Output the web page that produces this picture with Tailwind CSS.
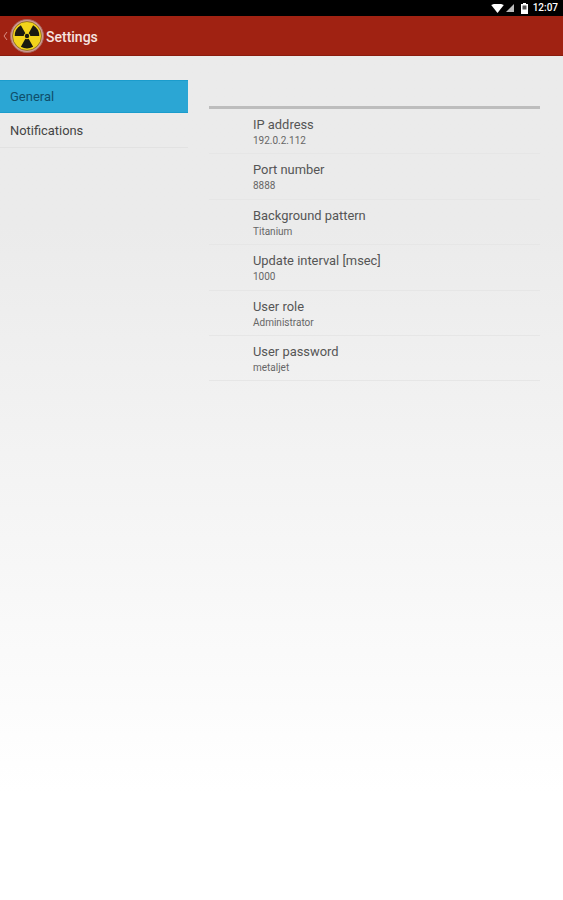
<!DOCTYPE html>
<html lang="en">
<head>
    <meta charset="UTF-8">
    <meta name="viewport" content="width=device-width, initial-scale=1.0">
    <title>Settings</title>
    <script src="https://cdn.jsdelivr.net/npm/@tailwindcss/browser@4"></script>
</head>
<body class="font-['Roboto',sans-serif]">
    <div class="flex flex-col w-[563px] h-[900px] overflow-hidden bg-gradient-to-b from-[#ebebeb] from-[25%] to-white to-[88%]">
        <!-- Status bar -->
        <div class="h-4 bg-black flex items-center justify-end pr-[5px] text-white shrink-0">
            <svg class="w-[13px] h-[9px]" viewBox="0 0 14 10"><path d="M0 1 Q7 -2 14 1 L7 10 Z" fill="#fff"/></svg>
            <svg class="w-[8px] h-[8px] ml-[2px]" viewBox="0 0 9 9"><path d="M0 9 L9 0 V9 Z" fill="#bbb"/></svg>
            <svg class="w-[7px] h-[11px] ml-[7px]" viewBox="0 0 7 11"><path d="M2 0 H5 V1 H7 V11 H0 V1 H2 Z" fill="#fff"/><rect x="1.5" y="2.5" width="4" height="4" fill="#555"/></svg>
            <span class="text-[10px] font-medium ml-[5px] leading-none">12:07</span>
        </div>

        <!-- Action bar -->
        <div class="h-10 bg-[#a02212] border-b border-[#8a1c0e] flex items-center shrink-0">
            <svg class="w-[5px] h-[10px] ml-[3px] mt-[1px]" viewBox="0 0 5 10"><path d="M4 1 L1 5 L4 9" fill="none" stroke="#d98f85" stroke-width="1"/></svg>
            <svg class="w-[34px] h-[34px] ml-[2px] mt-[1px]" viewBox="0 0 36 36">
                <circle cx="18" cy="18" r="17.5" fill="#cf9a92" stroke="#a8685e" stroke-width="1"/>
                <circle cx="18" cy="18" r="15.3" fill="#f2d31b" stroke="#5a3a10" stroke-width="0.6"/>
                <circle cx="18" cy="18" r="2.3" fill="#1a1a10"/>
                <path d="M19.75 14.97 L24.5 6.74 A13 13 0 0 1 31 18 H21.5 A3.5 3.5 0 0 0 19.75 14.97 Z" fill="#1a1a10"/>
                <path d="M16.25 14.97 L11.5 6.74 A13 13 0 0 0 5 18 H14.5 A3.5 3.5 0 0 1 16.25 14.97 Z" fill="#1a1a10"/>
                <path d="M16.25 21.03 L11.5 29.26 A13 13 0 0 0 24.5 29.26 L19.75 21.03 A3.5 3.5 0 0 1 16.25 21.03 Z" fill="#1a1a10"/>
            </svg>
            <span class="ml-[2px] mt-[3px] text-[14px] font-medium text-[#f6e4e0]">Settings</span>
        </div>

        <div class="flex flex-1 pt-6">
            <!-- Left menu -->
            <div class="w-[188px] shrink-0">
                <div class="h-[33px] bg-[#2ba6d4] border-y border-[#1b9ccc] flex items-center pl-[10px] text-[13px] text-[#0f4f6b]">General</div>
                <div class="h-[35px] border-b border-[#e2e2e2] flex items-center pl-[10px] pt-[1px] text-[12.9px] text-[#444]">Notifications</div>
            </div>

            <!-- Settings list -->
            <div class="ml-[21px] w-[331px] pt-[26px]">
                <div class="h-[3px] bg-[#bdbdbd]"></div>
                <div class="h-[45.4px] border-b border-[#e6e6e6] pl-[44px] pt-[8px]">
                    <div class="text-[12.9px] leading-[16px] text-[#555]">IP address</div>
                    <div class="text-[10px] leading-[16px] text-[#666]">192.0.2.112</div>
                </div>
                <div class="h-[45.4px] border-b border-[#e6e6e6] pl-[44px] pt-[8px]">
                    <div class="text-[12.9px] leading-[16px] text-[#555]">Port number</div>
                    <div class="text-[10px] leading-[16px] text-[#666]">8888</div>
                </div>
                <div class="h-[45.4px] border-b border-[#e6e6e6] pl-[44px] pt-[8px]">
                    <div class="text-[12.9px] leading-[16px] text-[#555]">Background pattern</div>
                    <div class="text-[10px] leading-[16px] text-[#666]">Titanium</div>
                </div>
                <div class="h-[45.4px] border-b border-[#e6e6e6] pl-[44px] pt-[8px]">
                    <div class="text-[12.9px] leading-[16px] text-[#555]">Update interval [msec]</div>
                    <div class="text-[10px] leading-[16px] text-[#666]">1000</div>
                </div>
                <div class="h-[45.4px] border-b border-[#e6e6e6] pl-[44px] pt-[8px]">
                    <div class="text-[12.9px] leading-[16px] text-[#555]">User role</div>
                    <div class="text-[10px] leading-[16px] text-[#666]">Administrator</div>
                </div>
                <div class="h-[45.4px] border-b border-[#e6e6e6] pl-[44px] pt-[8px]">
                    <div class="text-[12.9px] leading-[16px] text-[#555]">User password</div>
                    <div class="text-[10px] leading-[16px] text-[#666]">metaljet</div>
                </div>
            </div>
        </div>
    </div>
</body>
</html>
